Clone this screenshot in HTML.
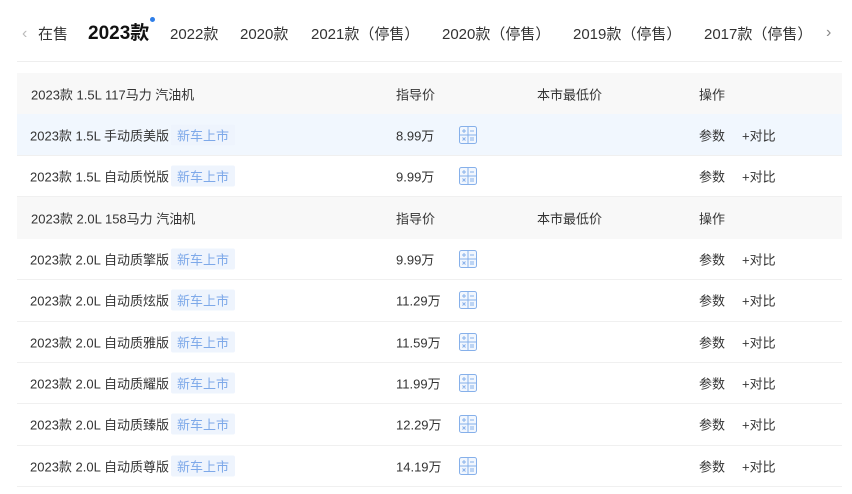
<!DOCTYPE html>
<html><head><meta charset="utf-8"><style>
*{margin:0;padding:0;box-sizing:border-box}
body{width:852px;height:494px;background:#fff;font-family:"Liberation Sans","Noto Sans CJK SC",sans-serif;color:#333;position:relative;overflow:hidden}
.a{position:absolute;white-space:nowrap}
.tab{position:absolute;top:24px;font-size:15px;color:#333;line-height:22px}
.row{position:absolute;left:17px;width:825px;height:41.5px;border-bottom:1px solid #f0f0f0}
.row span{position:absolute;top:50%;transform:translateY(-50%);font-size:13px;white-space:nowrap}
.hd{background:#f8f8f8;border-bottom:none}
.hl{background:#f1f7fe}
.tag{background:#eef4fd;color:#7ea9e9;padding:1px 6px;border-radius:2px}
</style></head><body>
<div class="a" style="left:22px;top:25px;font-size:16px;color:#bbb">‹</div>
<div class="tab" style="left:38px">在售</div>
<div class="tab" style="left:88px;font-size:19px;font-weight:bold;color:#111;top:23px">2023款</div>
<div class="a" style="left:150px;top:17px;width:5px;height:5px;border-radius:50%;background:#2f7ee8"></div>
<div class="tab" style="left:170px">2022款</div>
<div class="tab" style="left:240px">2020款</div>
<div class="tab" style="left:311px">2021款（停售）</div>
<div class="tab" style="left:442px">2020款（停售）</div>
<div class="tab" style="left:573px">2019款（停售）</div>
<div class="tab" style="left:704px">2017款（停售）</div>
<div class="a" style="left:826px;top:24px;font-size:16px;color:#888">›</div>
<div class="a" style="left:17px;top:61px;width:825px;height:1px;background:#eee"></div>

<div id="t"></div>
<script>
var rows=[
['h','2023款 1.5L 117马力 汽油机'],
['r','2023款 1.5L 手动质美版','8.99万',1],
['r','2023款 1.5L 自动质悦版','9.99万'],
['h','2023款 2.0L 158马力 汽油机'],
['r','2023款 2.0L 自动质擎版','9.99万'],
['r','2023款 2.0L 自动质炫版','11.29万'],
['r','2023款 2.0L 自动质雅版','11.59万'],
['r','2023款 2.0L 自动质耀版','11.99万'],
['r','2023款 2.0L 自动质臻版','12.29万'],
['r','2023款 2.0L 自动质尊版','14.19万']];
var h='';
var ic='<svg viewBox="0 0 18 18" style="position:absolute;left:442px;top:50%;transform:translateY(-50%);width:18px;height:18px"><rect x="0.5" y="0.5" width="17" height="17" rx="2" fill="#f2f7fe" stroke="#86b0ea"/><path d="M9 1v16M1 9h16M3 5h4M5 3v4M11 5h4M3.5 11.5l3 3M6.5 11.5l-3 3M11 12h4M11 14h4" stroke="#86b0ea" stroke-width="1" fill="none"/></svg>';
rows.forEach(function(r,i){
 var top=73+i*41.4;
 if(r[0]=='h'){
  h+='<div class="row hd" style="top:'+top+'px"><span style="left:14px">'+r[1]+'</span><span style="left:379px">指导价</span><span style="left:520px">本市最低价</span><span style="left:682px">操作</span></div>';
 }else{
  h+='<div class="row'+(r[3]?' hl':'')+'" style="top:'+top+'px"><span style="left:13px">'+r[1]+'</span><span class="tag" style="left:154px">新车上市</span><span style="left:379px">'+r[2]+'</span>'+ic+'<span style="left:682px">参数</span><span style="left:725px">+对比</span></div>';
 }
});
document.getElementById('t').innerHTML=h;
</script>
</body></html>
